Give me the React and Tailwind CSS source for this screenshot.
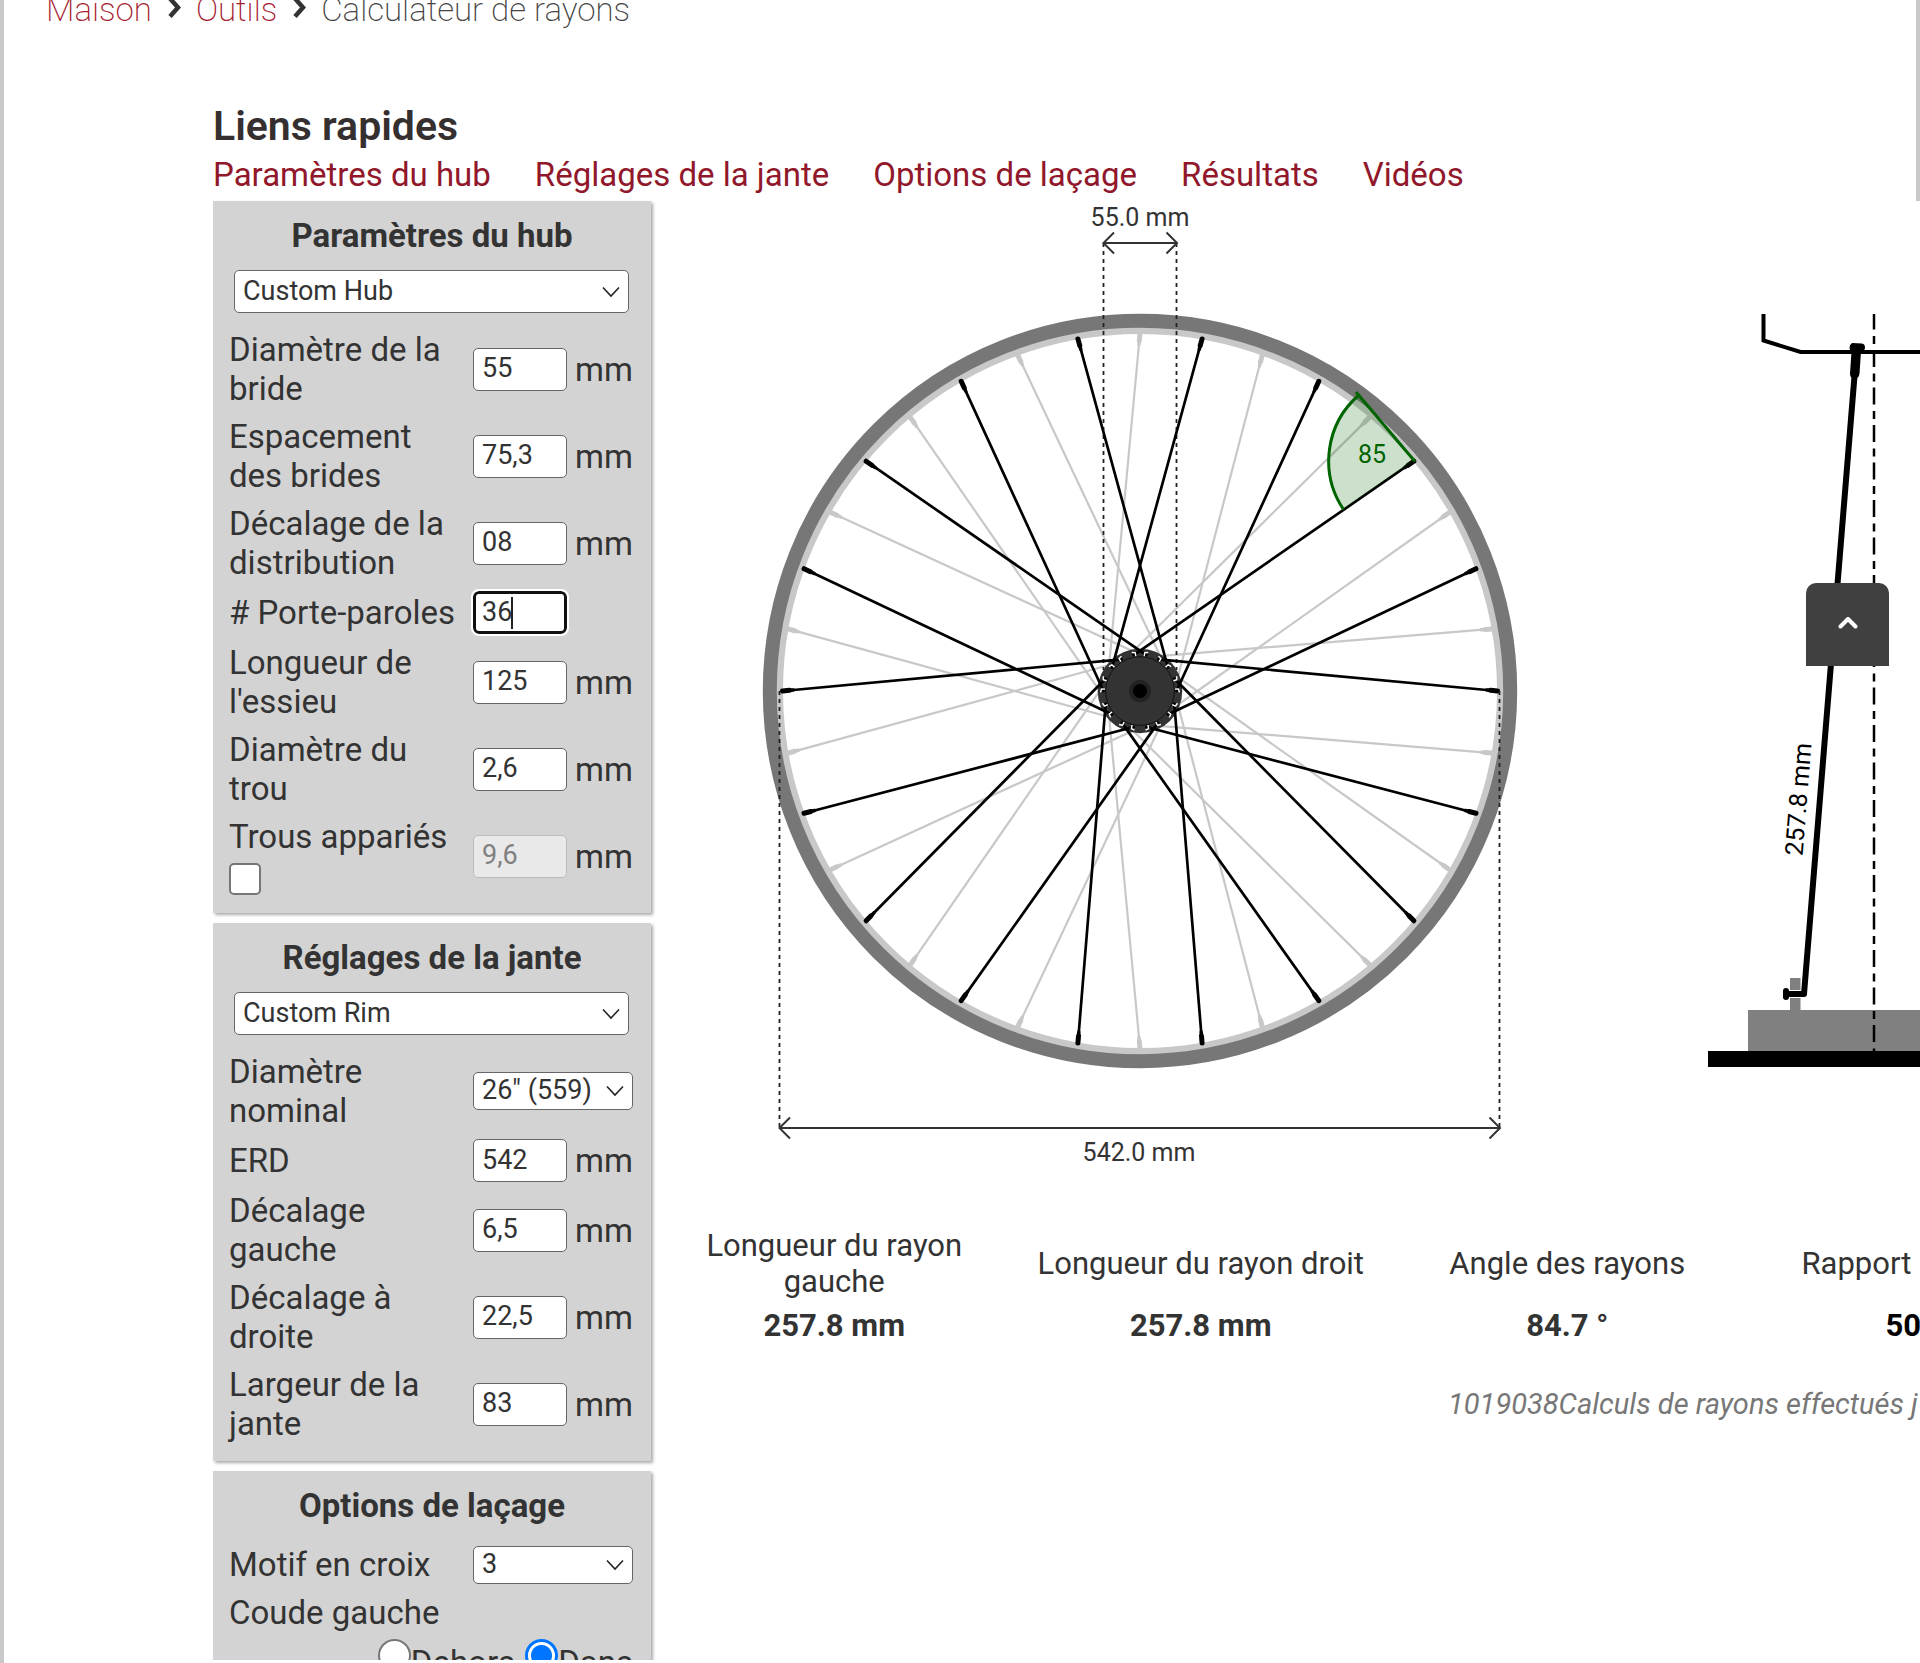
import React from "react";

const links = ["Paramètres du hub", "Réglages de la jante", "Options de laçage", "Résultats", "Vidéos"];

const hubFields = [
  { id: "flange", label: "Diamètre de la bride", value: "55" },
  { id: "spacing", label: "Espacement des brides", value: "75,3" },
  { id: "offset", label: "Décalage de la distribution", value: "08" },
  { id: "spokes", label: "# Porte-paroles", value: "36", active: true },
  { id: "axle", label: "Longueur de l'essieu", value: "125" },
  { id: "hole", label: "Diamètre du trou", value: "2,6" },
];

const rimFields = [
  { id: "erd", label: "ERD", value: "542" },
  { id: "left", label: "Décalage gauche", value: "6,5" },
  { id: "right", label: "Décalage à droite", value: "22,5" },
  { id: "width", label: "Largeur de la jante", value: "83" },
];

function Crumb() {
  return (
    <svg className="mx-[15px] h-6 w-3.5" viewBox="0 0 14 24" fill="none" stroke="#333" strokeWidth="4.500" aria-hidden="true">
      <path d="M3 1.500l8 9-8 9" />
    </svg>
  );
}

function Panel({ title, children }) {
  return (
    <section className="bg-[#d3d3d3] px-4 pt-[15px] pb-[18px] shadow-[2px_2px_3px_#aaa]">
      <h2 className="text-center text-[33px] leading-[39px] font-bold">{title}</h2>
      {children}
    </section>
  );
}

function Select({ id, value, className, label }) {
  return (
    <span className={"relative flex items-center " + className}>
      <select
        id={id}
        aria-label={label}
        defaultValue={value}
        className="h-full w-full appearance-none rounded-[5px] border border-[#666] bg-white pb-0.5 pl-2 text-[27px] leading-8"
      >
        <option>{value}</option>
      </select>
      <svg className="pointer-events-none absolute right-[9px] h-3 w-[18px]" viewBox="0 0 18 12" fill="none" stroke="#222" strokeWidth="1.6" aria-hidden="true">
        <path d="M1 1.500l8 8.500 8-8.500" />
      </svg>
    </span>
  );
}

function Field({ id, label, value, active }) {
  return (
    <div className="flex items-center">
      <label htmlFor={id} className="w-[235px]">{label}</label>
      <span className="relative ml-[9px] flex items-center">
        <input
          id={id}
          defaultValue={value}
          className={
            active
              ? "h-[43px] w-[94px] rounded-[6px] border-[3px] border-[#101010] bg-white pl-1.5 pb-0.5 text-[27px] outline-2 outline-white"
              : "h-[43px] w-[94px] rounded-[5px] border border-[#666] bg-white pl-2 pb-0.5 text-[27px]"
          }
        />
        {active && <i className="absolute top-1.5 left-[38px] h-8 w-0.5 bg-[#222]" />}
      </span>
      {!active && <span className="ml-2">mm</span>}
    </div>
  );
}

const CX = 1140;
const CY = 691;
const at = (deg, r) => {
  const a = (deg * Math.PI) / 180;
  return [CX + r * Math.cos(a), CY - r * Math.sin(a)];
};

function Spokes({ start, color, width }) {
  return Array.from({ length: 18 }, (_, i) => {
    const deg = start + i * 20;
    const [x1, y1] = at(deg, 357.5);
    const [x2, y2] = at(deg + (i % 2 ? -60 : 60), 36.5);
    const len = Math.hypot(x2 - x1, y2 - y1);
    const ux = (x2 - x1) / len;
    const uy = (y2 - y1) / len;
    return (
      <g key={deg} stroke={color} strokeLinecap="round">
        <line x1={x1} y1={y1} x2={x2} y2={y2} strokeWidth={width} />
        <line x1={x1} y1={y1} x2={x1 + ux * 7} y2={y1 + uy * 7} strokeWidth="5" />
        <line x1={x1 + ux * 7} y1={y1 + uy * 7} x2={x1 + ux * 11} y2={y1 + uy * 11} strokeWidth="3.500" />
      </g>
    );
  });
}

function Wheel() {
  return (
    <svg className="h-[980px] w-[976px] shrink-0" viewBox="651 201 976 980" fontFamily="Roboto, sans-serif" fontSize="25">
      <circle cx={CX} cy={CY} r="360.5" fill="none" stroke="#c8c8c8" strokeWidth="7" />
      <circle cx={CX} cy={CY} r="370.2" fill="none" stroke="#777" strokeWidth="14" />
      <Spokes start={10} color="#c8c8c8" width="2.200" />
      <g stroke="#222" strokeWidth="1.800" strokeDasharray="4 4">
        <path d="M1103.500 243V670" />
        <path d="M1176.500 243V670" />
      </g>
      <circle cx={CX} cy={CY} r="42.300" fill="#333" />
      <Spokes start={0} color="#000" width="2.700" />
      {Array.from({ length: 18 }, (_, i) => {
        const side = i % 2 ? 1 : -1;
        const [x1, y1] = at(i * 20 + side * 2, 39.5);
        const [x2, y2] = at(i * 20 - side * 3, 38.5);
        const [x3, y3] = at(i * 20 - side * 3, 35);
        return <path key={i} d={`M${x1} ${y1}L${x2} ${y2}L${x3} ${y3}`} fill="none" stroke="#fff" strokeWidth="1.400" strokeLinejoin="round" />;
      })}
      <circle cx={CX} cy={CY} r="34.300" fill="#333" stroke="#111" strokeWidth="1" />
      <circle cx={CX} cy={CY} r="11" fill="#222" />
      <circle cx={CX} cy={CY} r="7" fill="#000" />
      <g stroke="#222" strokeWidth="1.800" strokeDasharray="4 4">
        <path d="M779.500 691V1128" />
        <path d="M1499.500 691V1128" />
      </g>
      <g stroke="#333" strokeWidth="2" fill="none">
        <path d="M1104 243h73M1114 232.500l-10.500 10.500 10.500 10.500M1166.500 232.500l10.500 10.500-10.500 10.500" />
        <path d="M779.500 1128h720M790 1117.500l-10.500 10.500 10.500 10.500M1489.500 1117.500l10.500 10.500-10.500 10.500" />
      </g>
      <g fill="#333" textAnchor="middle">
        <text x="1140" y="226">55.0 mm</text>
        <text x="1139" y="1161">542.0 mm</text>
      </g>
      <path d="M1415 460L1358 393.500A87 87 0 0 0 1343.500 509.500Z" fill="#006400" fillOpacity="0.200" />
      <path d="M1415 461.500L1356 392M1359 395A87 87 0 0 0 1343.500 509.500" fill="none" stroke="#006400" strokeWidth="3" />
      <text x="1372" y="463" textAnchor="middle" fill="#006400">85</text>
    </svg>
  );
}

function Section() {
  return (
    <svg className="h-[980px] w-[490px] shrink-0" viewBox="1627 201 490 980" fontFamily="Roboto, sans-serif" fontSize="25">
      <path d="M1748 1010h380v42h-380z" fill="#808080" />
      <path d="M1790 978h10.500v33h-10.500z" fill="#808080" />
      <path d="M1790 990h11v8h-11z" fill="#fff" />
      <path d="M1708 1051h420v16h-420z" fill="#000" />
      <path d="M1763.500 314v26.500l37 11.500h330" fill="none" stroke="#000" strokeWidth="4" />
      <path d="M1874 314V1051" stroke="#000" strokeWidth="2.500" strokeDasharray="17 6.500 8 6" strokeDashoffset="1.500" />
      <path d="M1854.500 376L1804 994h-18" fill="none" stroke="#000" strokeWidth="6" strokeLinejoin="round" />
      <rect x="1783" y="988" width="6" height="12" rx="3" />
      <path d="M1852 343l10 .5q3 .5 3 4t-4 4l-1.500 22q-.5 5-5 5t-4.500-5l1.500-22q-2-1-2-4t2.500-4.500z" />
      <text transform="translate(1807 800) rotate(-85.300)" textAnchor="middle">257.8 mm</text>
    </svg>
  );
}

function Result({ label, value, unit }) {
  return (
    <div className="flex flex-col">
      <dt className="flex h-18 items-center justify-center px-10 leading-9">{label}</dt>
      <dd className="mt-2 font-bold">{value} {unit}</dd>
    </div>
  );
}

export default function App() {
  return (
    <div className="relative h-screen overflow-hidden border-l-4 border-[#c9c9c9] bg-white text-[#333]" style={{ fontFamily: "Roboto, sans-serif" }}>
      <div className="h-[calc(100vh-3px)] overflow-hidden text-[33px] leading-[39px]">
        <header className="border-r-4 border-[#c9c9c9] pb-0.5">
          <nav className="-mt-[11px] flex h-10 items-center pl-[42px] font-extralight" aria-label="Fil d'Ariane">
            <a href="#maison" className="text-[#a51c30]">Maison</a>
            <Crumb />
            <a href="#outils" className="text-[#a51c30]">Outils</a>
            <Crumb />
            <span className="text-[#444]">Calculateur de rayons</span>
          </nav>
          <h1 className="mt-[73px] pl-[209px] text-[41px] leading-12 font-semibold text-[#352f2f]">Liens rapides</h1>
          <nav className="flex gap-11 pt-px pl-[209px] leading-12">
            {links.map((l) => (
              <a key={l} href={"#" + l} className="whitespace-nowrap text-[#91172b]">{l}</a>
            ))}
          </nav>
        </header>

        <main className="flex pl-[209px]">
          <form className="flex w-[438px] shrink-0 flex-col gap-2.5">
            <Panel title="Paramètres du hub">
              <Select label="Moyeu" value="Custom Hub" className="mr-1.5 ml-[5px] mt-[15px] h-[43px]" />
              <div className="mt-[17px] flex flex-col gap-[9px]">
                {hubFields.map((f) => <Field key={f.id} {...f} />)}
                <div className="flex items-center">
                  <div className="w-[235px]">
                    <label htmlFor="paired" className="block">Trous appariés</label>
                    <input id="paired" type="checkbox" className="mt-[7px] block size-8 appearance-none rounded-[5px] border-2 border-[#767676] bg-white" />
                  </div>
                  <input aria-label="Distance des trous appariés" disabled defaultValue="9,6" className="ml-[9px] h-[43px] w-[94px] rounded-[5px] border border-[#bbb] bg-[#e9e9e9] pb-0.5 pl-2 text-[27px] text-[#808080]" />
                  <span className="ml-2">mm</span>
                </div>
              </div>
            </Panel>

            <Panel title="Réglages de la jante">
              <Select label="Jante" value="Custom Rim" className="mr-1.5 ml-[5px] mt-[15px] h-[43px]" />
              <div className="mt-[17px] flex flex-col gap-[9px]">
                <div className="flex items-center">
                  <label htmlFor="nominal" className="w-[235px] pr-10">Diamètre nominal</label>
                  <Select id="nominal" value={'26" (559)'} className="ml-[9px] h-[38px] w-40" />
                </div>
                {rimFields.map((f) => <Field key={f.id} {...f} />)}
              </div>
            </Panel>

            <Panel title="Options de laçage">
              <div className="mt-5 flex flex-col">
                <div className="flex items-center">
                  <label htmlFor="cross" className="w-[235px]">Motif en croix</label>
                  <Select id="cross" value="3" className="ml-[9px] h-[38px] w-40" />
                </div>
                <p className="mt-[9px]">Coude gauche</p>
                <div className="mt-[7px] flex justify-end pr-0.5">
                  <input id="out" type="radio" name="elbow" className="size-[33px] appearance-none rounded-full border-2 border-[#767676] bg-white" />
                  <label htmlFor="out" className="mt-1 mr-2.5">Dehors</label>
                  <input id="in" type="radio" name="elbow" defaultChecked className="size-[33px] appearance-none rounded-full border-[3px] border-[#0075ff] bg-white bg-[radial-gradient(#0075ff_0_10px,#fff_11px)]" />
                  <label htmlFor="in" className="mt-1">Dans</label>
                </div>
              </div>
            </Panel>
          </form>

          <div className="w-[1466px] shrink-0">
            <div className="flex">
              <Wheel />
              <Section />
            </div>
            <dl className="mt-[47px] grid grid-cols-4 text-center text-[31px] leading-9">
              <Result label="Longueur du rayon gauche" value="257.8" unit="mm" />
              <Result label={<span className="whitespace-nowrap">Longueur du rayon droit</span>} value="257.8" unit="mm" />
              <Result label="Angle des rayons" value="84.7" unit="°" />
              <div className="text-left">
                <dt className="flex h-18 items-center pl-[51px]">Rapport</dt>
                <dd className="mt-2 pl-[135px] font-bold text-black">50</dd>
              </div>
            </dl>
            <p className="mt-[42px] pl-[797px] text-[29px] leading-9 whitespace-nowrap text-[#777] italic">1019038Calculs de rayons effectués j</p>
          </div>
        </main>
      </div>

      <button type="button" aria-label="Haut de page" className="absolute top-[583px] right-[31px] flex size-[83px] items-center justify-center rounded-t-[10px] bg-[#404040] pb-1">
        <svg className="h-3 w-5" viewBox="0 0 20 12" fill="none" stroke="#fff" strokeWidth="4" strokeLinecap="round" strokeLinejoin="round" aria-hidden="true">
          <path d="M2.500 9.500l7.500-7.500 7.500 7.500" />
        </svg>
      </button>
    </div>
  );
}
